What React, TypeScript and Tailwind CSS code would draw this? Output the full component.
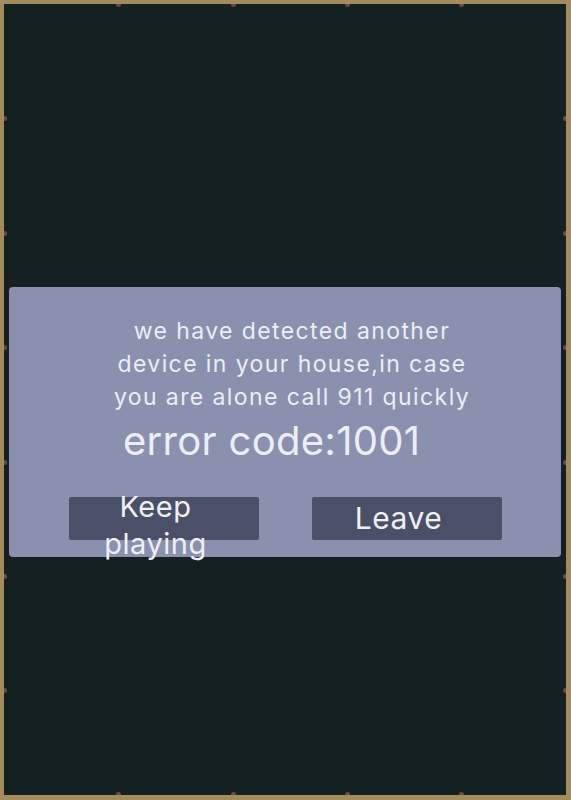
import React from "react";

// Little brown studs spaced along the wooden frame.
const studsX = [114, 229, 343, 457];
const studsY = [114, 229, 343, 458, 572, 686];

function FrameStuds() {
  return (
    <>
      {studsX.map((x) => (
        <span
          key={`t${x}`}
          className="absolute top-0 h-[3px] w-[5px] rounded-b-full bg-[#6d4b3f]"
          style={{ left: x - 2 }}
        />
      ))}
      {studsX.map((x) => (
        <span
          key={`b${x}`}
          className="absolute bottom-0 h-[3px] w-[5px] rounded-t-full bg-[#6d4b3f]"
          style={{ left: x - 2 }}
        />
      ))}
      {studsY.map((y) => (
        <span
          key={`l${y}`}
          className="absolute left-0 h-[5px] w-[3px] rounded-r-full bg-[#6d4b3f]"
          style={{ top: y - 2 }}
        />
      ))}
      {studsY.map((y) => (
        <span
          key={`r${y}`}
          className="absolute right-0 h-[5px] w-[3px] rounded-l-full bg-[#6d4b3f]"
          style={{ top: y - 2 }}
        />
      ))}
    </>
  );
}

function DialogButton({ label, textClass }: { label: string; textClass: string }) {
  return (
    <button
      type="button"
      className="flex h-[43px] w-[190px] items-center justify-center rounded-[2px] bg-[#4b5068] pr-4 tracking-[0.5px] text-[#eef0f6]"
    >
      <span className={`block ${textClass}`}>{label}</span>
    </button>
  );
}

export default function App() {
  return (
    <div
      className="relative h-[800px] w-[571px] border-t-[4px] border-r-[5px] border-b-[5px] border-l-[4px] border-[#a28c5e] bg-[#152023] pt-[283px] pl-[5px]"
      style={{ fontFamily: "Inter, 'Noto Sans', sans-serif" }}
    >
      <FrameStuds />
      <div className="flex h-[270px] w-[552px] flex-col rounded-[4px] bg-[#8a90ae]">
        <div className="ml-[102px] w-[362px] pt-[28px] text-[#eceef5]">
          <p className="text-center text-[23px] leading-[33px] tracking-[1.4px]">
            we have detected another device in your house,in case you are alone call 911 quickly
          </p>
          <p className="mt-[4px] pl-[12px] text-[40px] leading-[46px] tracking-[0.3px]">error code:1001</p>
        </div>
        <div className="mt-[33px] flex justify-center gap-[53px]">
          <DialogButton label="Keep playing" textClass="w-[112px] pt-[12px] text-[29px] leading-[37px]" />
          <DialogButton label="Leave" textClass="pb-[1px] text-[30px] leading-[30px]" />
        </div>
      </div>
    </div>
  );
}
